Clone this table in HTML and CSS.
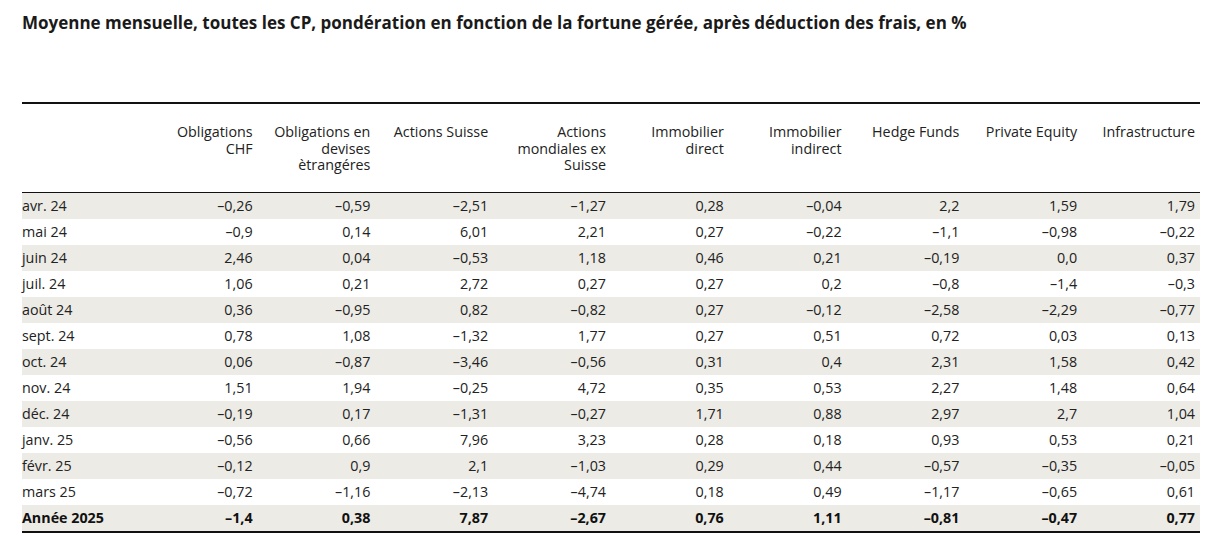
FILE: index.html
```html
<!DOCTYPE html>
<html lang="fr">
<head>
<meta charset="utf-8">
<title>Moyenne mensuelle</title>
<link rel="stylesheet" href="styles.css">
</head>
<body>
<div class="page">
  <h1 class="title">Moyenne mensuelle, toutes les CP, pondération en fonction de la fortune gérée, après déduction des frais, en %</h1>
  <table class="perf">
    <colgroup>
      <col><col><col><col><col><col><col><col><col><col>
    </colgroup>
    <thead>
      <tr>
        <th class="lbl"></th>
        <th>Obligations<br>CHF</th>
        <th>Obligations en<br>devises<br>ètrangéres</th>
        <th>Actions Suisse</th>
        <th>Actions<br>mondiales ex<br>Suisse</th>
        <th>Immobilier<br>direct</th>
        <th>Immobilier<br>indirect</th>
        <th>Hedge Funds</th>
        <th>Private Equity</th>
        <th>Infrastructure</th>
      </tr>
    </thead>
    <tbody>
      <tr class="odd"><td class="lbl">avr. 24</td><td>–0,26</td><td>–0,59</td><td>–2,51</td><td>–1,27</td><td>0,28</td><td>–0,04</td><td>2,2</td><td>1,59</td><td>1,79</td></tr>
      <tr><td class="lbl">mai 24</td><td>–0,9</td><td>0,14</td><td>6,01</td><td>2,21</td><td>0,27</td><td>–0,22</td><td>–1,1</td><td>–0,98</td><td>–0,22</td></tr>
      <tr class="odd"><td class="lbl">juin 24</td><td>2,46</td><td>0,04</td><td>–0,53</td><td>1,18</td><td>0,46</td><td>0,21</td><td>–0,19</td><td>0,0</td><td>0,37</td></tr>
      <tr><td class="lbl">juil. 24</td><td>1,06</td><td>0,21</td><td>2,72</td><td>0,27</td><td>0,27</td><td>0,2</td><td>–0,8</td><td>–1,4</td><td>–0,3</td></tr>
      <tr class="odd"><td class="lbl">août 24</td><td>0,36</td><td>–0,95</td><td>0,82</td><td>–0,82</td><td>0,27</td><td>–0,12</td><td>–2,58</td><td>–2,29</td><td>–0,77</td></tr>
      <tr><td class="lbl">sept. 24</td><td>0,78</td><td>1,08</td><td>–1,32</td><td>1,77</td><td>0,27</td><td>0,51</td><td>0,72</td><td>0,03</td><td>0,13</td></tr>
      <tr class="odd"><td class="lbl">oct. 24</td><td>0,06</td><td>–0,87</td><td>–3,46</td><td>–0,56</td><td>0,31</td><td>0,4</td><td>2,31</td><td>1,58</td><td>0,42</td></tr>
      <tr><td class="lbl">nov. 24</td><td>1,51</td><td>1,94</td><td>–0,25</td><td>4,72</td><td>0,35</td><td>0,53</td><td>2,27</td><td>1,48</td><td>0,64</td></tr>
      <tr class="odd"><td class="lbl">déc. 24</td><td>–0,19</td><td>0,17</td><td>–1,31</td><td>–0,27</td><td>1,71</td><td>0,88</td><td>2,97</td><td>2,7</td><td>1,04</td></tr>
      <tr><td class="lbl">janv. 25</td><td>–0,56</td><td>0,66</td><td>7,96</td><td>3,23</td><td>0,28</td><td>0,18</td><td>0,93</td><td>0,53</td><td>0,21</td></tr>
      <tr class="odd"><td class="lbl">févr. 25</td><td>–0,12</td><td>0,9</td><td>2,1</td><td>–1,03</td><td>0,29</td><td>0,44</td><td>–0,57</td><td>–0,35</td><td>–0,05</td></tr>
      <tr><td class="lbl">mars 25</td><td>–0,72</td><td>–1,16</td><td>–2,13</td><td>–4,74</td><td>0,18</td><td>0,49</td><td>–1,17</td><td>–0,65</td><td>0,61</td></tr>
    </tbody>
    <tfoot>
      <tr class="odd total"><td class="lbl">Année 2025</td><td>–1,4</td><td>0,38</td><td>7,87</td><td>–2,67</td><td>0,76</td><td>1,11</td><td>–0,81</td><td>–0,47</td><td>0,77</td></tr>
    </tfoot>
  </table>
</div>
</body>
</html>
```
FILE: styles.css
```css
html, body {
  margin: 0;
  padding: 0;
  background: #ffffff;
}

.page {
  padding: 11px 12px 0 22px;
  font-family: "Open Sans", "Noto Sans", sans-serif;
  color: #222222;
}

.title {
  margin: 0;
  font-size: 17px;
  line-height: 24px;
  font-weight: 700;
  color: #1a1a1a;
}

.perf {
  margin-top: 67px;
  width: 1178px;
  table-layout: fixed;
  border-collapse: separate;
  border-spacing: 0;
  font-size: 14.3px;
}

.perf th {
  font-weight: 400;
  text-align: right;
  vertical-align: top;
  line-height: 16.5px;
  padding: 20px 5px 0 0;
  height: 68px;
  border-top: 2px solid #111111;
  border-bottom: 1px solid #111111;
}

.perf td {
  text-align: right;
  height: 26px;
  padding: 0 5px 0 0;
  line-height: 26px;
  white-space: nowrap;
}

.perf .lbl {
  text-align: left;
  padding-left: 0;
}

.perf tr.odd td {
  background: #ecebe5;
}

.perf tr.total td {
  font-weight: 700;
  color: #111111;
  border-bottom: 2px solid #111111;
}
```
